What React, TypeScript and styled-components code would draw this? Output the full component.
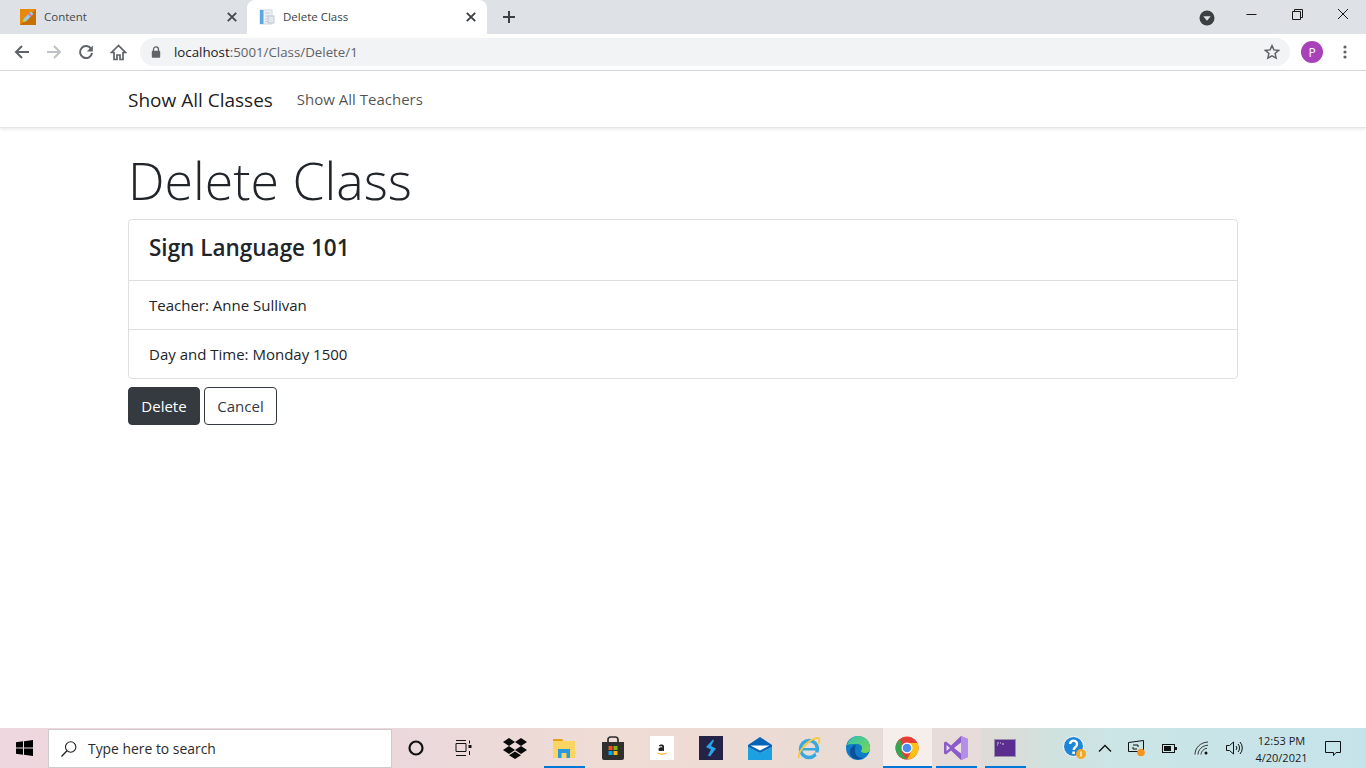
import React from "react";
import styled, { createGlobalStyle } from "styled-components";

const Global = createGlobalStyle`
  html, body { margin: 0; padding: 0; height: 100%; background: #fff; overflow: hidden; }
  #root { height: 100%; }
  * { box-sizing: border-box; }
  body { font-family: "Open Sans", "Noto Sans", "Liberation Sans", sans-serif; color: #212529; }
`;

const Page = styled.div`
  height: 768px;
  display: flex;
  flex-direction: column;
`;

/* Browser chrome */
const TabStrip = styled.div`
  height: 34px;
  background: #dee1e6;
  display: flex;
  flex: none;
`;
const Tab = styled.div<{ $active?: boolean }>`
  width: ${(p) => (p.$active ? "240px" : "247px")};
  padding: ${(p) => (p.$active ? "0 8px 0 12px" : "0 7px 0 20px")};
  height: 34px;
  display: flex;
  align-items: center;
  background: ${(p) => (p.$active ? "#fff" : "transparent")};
  border-radius: 8px 8px 0 0;
  flex: none;
`;
const TabTitle = styled.span<{ $active?: boolean }>`
  flex: 1;
  margin-left: 8px;
  padding-bottom: 2px;
  font-size: 11.5px;
  color: ${(p) => (p.$active ? "#3c4043" : "#45494d")};
  white-space: nowrap;
`;
const PlusButton = styled.div`
  width: 44px;
  display: flex;
  align-items: center;
  justify-content: center;
`;
const StripSpacer = styled.div`
  flex: 1;
`;
const WindowControls = styled.div`
  display: flex;
  align-items: flex-start;
  height: 34px;
`;
const ProfileDot = styled.div`
  width: 23px;
  height: 34px;
  display: flex;
  justify-content: center;
  align-items: center;
  margin-right: 10px;
  padding-top: 1px;
`;
const WinButton = styled.div`
  width: 46px;
  height: 28px;
  display: flex;
  align-items: center;
  justify-content: center;
`;
const Toolbar = styled.div`
  height: 37px;
  flex: none;
  background: #fff;
  border-bottom: 1px solid #dadce0;
  display: flex;
  align-items: center;
  padding: 0 0 0 6px;
`;
const ToolButton = styled.div`
  width: 32px;
  height: 28px;
  display: flex;
  align-items: center;
  justify-content: center;
`;
const Omnibox = styled.div`
  flex: 1;
  height: 28px;
  margin-left: 6px;
  background: #f1f3f4;
  border-radius: 14px;
  display: flex;
  align-items: center;
  padding: 0 10px 0 11px;
`;
const Url = styled.div`
  flex: 1;
  margin-left: 13px;
  font-size: 13.3px;
  color: #5f6368;
  white-space: nowrap;
  b { font-weight: 400; color: #202124; }
`;
const Avatar = styled.div`
  width: 22px;
  height: 22px;
  border-radius: 50%;
  background: #a842b8;
  color: #fff;
  font-size: 12px;
  display: flex;
  align-items: center;
  justify-content: center;
  margin: 0 12px 0 11px;
`;
const MenuButton = styled.div`
  width: 20px;
  display: flex;
  justify-content: center;
  margin-right: 11px;
`;

/* Site */
const Navbar = styled.nav`
  height: 57px;
  flex: none;
  background: #fff;
  border-bottom: 1px solid #e5e5e5;
  box-shadow: 0 1px 4px rgba(0, 0, 0, 0.1);
  display: flex;
  align-items: center;
  padding: 0 128px;
`;
const Brand = styled.a`
  font-size: 19px;
  padding-top: 2px;
  color: rgba(0, 0, 0, 0.9);
  margin-right: 24px;
`;
const NavLink = styled.a`
  font-size: 15px;
  color: rgba(0, 0, 0, 0.7);
`;
const Main = styled.main`
  flex: 1;
  padding: 0 128px;
`;
const Title = styled.h1`
  margin: 18px 0 5px;
  font-size: 51.8px;
  line-height: 68px;
  font-weight: 300;
  color: #212529;
`;
const Card = styled.div`
  border: 1px solid rgba(0, 0, 0, 0.125);
  border-radius: 4px;
  margin-bottom: 8px;
`;
const CardHeading = styled.div`
  height: 61px;
  padding: 0 20px 6px;
  display: flex;
  align-items: center;
  font-size: 22.5px;
  font-weight: 600;
  border-bottom: 1px solid rgba(0, 0, 0, 0.125);
`;
const CardRow = styled.div<{ $last?: boolean }>`
  height: ${(p) => (p.$last ? "48px" : "49px")};
  padding: 0 20px;
  display: flex;
  align-items: center;
  font-size: 15px;
  border-bottom: ${(p) => (p.$last ? "none" : "1px solid rgba(0, 0, 0, 0.125)")};
`;
const Actions = styled.div`
  display: flex;
  gap: 4px;
`;
const Button = styled.button<{ $dark?: boolean }>`
  height: 38px;
  min-width: 73px;
  width: ${(p) => (p.$dark ? "72px" : "73px")};
  padding: 0;
  border: 1px solid #343a40;
  border-radius: 4px;
  background: ${(p) => (p.$dark ? "#343a40" : "#fff")};
  color: ${(p) => (p.$dark ? "#fff" : "#343a40")};
  font: inherit;
  font-size: 15px;
  min-width: 0;
`;

/* Taskbar */
const Taskbar = styled.footer`
  height: 40px;
  flex: none;
  display: flex;
  align-items: stretch;
  background: linear-gradient(90deg, #eed7de 0, #ead8dc 400px, #efdcd4 620px, #eadbd5 830px, #dcdcd8 1000px, #cfe2df 1060px, #cbe5e6 1120px, #c5e3ea 1366px);
`;
const StartButton = styled.div`
  width: 48px;
  display: flex;
  align-items: center;
  justify-content: center;
`;
const SearchBox = styled.div`
  width: 344px;
  margin: 1px 0.5px 0 0;
  background: #fff;
  border: 1px solid #ccc;
  display: flex;
  align-items: center;
  padding-left: 11px;
  font-size: 13.9px;
  color: #2b2b2b;
  gap: 10px;
`;
const Cell = styled.div<{ $tone?: "hot" | "warm" }>`
  width: 49px;
  position: relative;
  display: flex;
  align-items: center;
  justify-content: center;
  background: ${(p) =>
    p.$tone === "hot" ? "#f6eeeb" : p.$tone === "warm" ? "#e8dcdb" : "transparent"};
`;
const RunMark = styled.span<{ $wide?: boolean }>`
  position: absolute;
  bottom: 0;
  height: 2px;
  left: ${(p) => (p.$wide ? "0" : "4px")};
  right: ${(p) => (p.$wide ? "0" : "4px")};
  background: #0078d7;
`;
const Tray = styled.div`
  flex: 1;
  display: flex;
  align-items: center;
  justify-content: flex-end;
`;
const TrayIcon = styled.div<{ $w: number }>`
  width: ${(p) => p.$w}px;
  display: flex;
  justify-content: center;
  align-items: center;
`;
const Clock = styled.div`
  width: 71px;
  padding: 1px 2px 0 0;
  text-align: center;
  font-size: 11px;
  line-height: 17px;
  color: #1b1b1b;
`;
const Notify = styled.div`
  width: 30px;
  margin-right: 18px;
  display: flex;
  justify-content: center;
`;

const Close = ({ c = "#45494d" }: { c?: string }) => (
  <svg width="16" height="16" viewBox="0 0 16 16"><path d="M3.8 3.8l8.4 8.4M12.2 3.8l-8.4 8.4" stroke={c} strokeWidth="1.9" fill="none" /></svg>
);

export default function App() {
  return (
    <Page>
      <Global />
      <TabStrip>
        <Tab>
          <svg width="16" height="16" viewBox="0 0 16 16">
            <rect width="16" height="16" fill="#e8890c" />
            <path d="M0 16L16 0v16z" fill="#c96f05" />
            <path d="M3 13l1-3.4L11 2.6l2.4 2.4-7 7z" fill="#8ed0ee" />
            <path d="M9.6 4l2.4 2.4-1.5 1.5L8 5.5z" fill="#e66bb0" />
            <path d="M3 13l1-3.4 2.4 2.4z" fill="#b5d86a" />
          </svg>
          <TabTitle>Content</TabTitle>
          <Close />
        </Tab>
        <Tab $active>
          <svg width="16" height="16" viewBox="0 0 16 16">
            <rect x="1" y="1" width="12" height="14" fill="#eef1f5" stroke="#cfd6de" />
            <rect x="1" y="1" width="3.5" height="14" fill="#5ea6e0" />
            <path d="M6 4h5M6 7h6M6 10h6M6 12.5h6" stroke="#c3cad3" />
            <rect x="9" y="7" width="6" height="7" fill="#e3e7ec" stroke="#c3cad3" />
          </svg>
          <TabTitle $active>Delete Class</TabTitle>
          <Close c="#3c4043" />
        </Tab>
        <PlusButton>
          <svg width="14" height="14" viewBox="0 0 14 14"><path d="M7 1v12M1 7h12" stroke="#3c4043" strokeWidth="2" /></svg>
        </PlusButton>
        <StripSpacer />
        <WindowControls>
          <ProfileDot>
            <svg width="16" height="16" viewBox="0 0 16 16"><circle cx="8" cy="8" r="7.5" fill="#3c4043" /><path d="M4.3 6.2h7.4L8 10.8z" fill="#dee1e6" /></svg>
          </ProfileDot>
          <WinButton>
            <svg width="11" height="11" viewBox="0 0 11 11"><path d="M0.5 5.5h10" stroke="#1a1a1a" /></svg>
          </WinButton>
          <WinButton>
            <svg width="11" height="11" viewBox="0 0 11 11"><path d="M0.5 2.5h8v8h-8zM2.5 2.5v-2h8v8h-2" stroke="#1a1a1a" fill="none" /></svg>
          </WinButton>
          <WinButton>
            <svg width="12" height="12" viewBox="0 0 12 12"><path d="M1 1l10 10M11 1L1 11" stroke="#1a1a1a" /></svg>
          </WinButton>
        </WindowControls>
      </TabStrip>
      <Toolbar>
        <ToolButton>
          <svg width="16" height="16" viewBox="0 0 16 16"><path d="M15 8H2.5M8 2L2 8l6 6" stroke="#5f6368" strokeWidth="2" fill="none" /></svg>
        </ToolButton>
        <ToolButton>
          <svg width="16" height="16" viewBox="0 0 16 16"><path d="M1 8h12.5M8 2l6 6-6 6" stroke="#bdc1c6" strokeWidth="2" fill="none" /></svg>
        </ToolButton>
        <ToolButton>
          <svg width="16" height="16" viewBox="0 0 16 16"><path d="M13.2 5A6 6 0 1 0 14 8.8" stroke="#5f6368" strokeWidth="2" fill="none" /><path d="M14.8 1.5v6h-6z" fill="#5f6368" /></svg>
        </ToolButton>
        <ToolButton>
          <svg width="17" height="17" viewBox="0 0 17 17"><path d="M8.5 1.5L1.5 8.5h2.5v7h3v-4.500h3v4.500h3v-7h2.500z" stroke="#5f6368" strokeWidth="1.7" fill="none" /></svg>
        </ToolButton>
        <Omnibox>
          <svg width="10" height="12" viewBox="0 0 10 12"><path d="M2.5 5V3.4a2.5 2.5 0 0 1 5 0V5" stroke="#5f6368" strokeWidth="1.3" fill="none" /><rect x="0.8" y="4.8" width="8.4" height="7" rx="1" fill="#5f6368" /></svg>
          <Url><b>localhost</b>:5001/Class/Delete/1</Url>
          <svg width="16" height="16" viewBox="0 0 16 16"><path d="M8 1.6l1.9 4.3 4.7.5-3.5 3.1 1 4.6L8 11.8l-4.1 2.3 1-4.6L1.4 6.4l4.7-.5z" stroke="#5f6368" strokeWidth="1.5" fill="none" /></svg>
        </Omnibox>
        <Avatar>P</Avatar>
        <MenuButton>
          <svg width="4" height="14" viewBox="0 0 4 14"><circle cx="2" cy="2" r="1.6" fill="#5f6368" /><circle cx="2" cy="7" r="1.6" fill="#5f6368" /><circle cx="2" cy="12" r="1.6" fill="#5f6368" /></svg>
        </MenuButton>
      </Toolbar>

      <Navbar>
        <Brand>Show All Classes</Brand>
        <NavLink>Show All Teachers</NavLink>
      </Navbar>
      <Main>
        <Title>Delete Class</Title>
        <Card>
          <CardHeading>Sign Language 101</CardHeading>
          <CardRow>Teacher: Anne Sullivan</CardRow>
          <CardRow $last>Day and Time: Monday 1500</CardRow>
        </Card>
        <Actions>
          <Button $dark>Delete</Button>
          <Button>Cancel</Button>
        </Actions>
      </Main>

      <Taskbar>
        <StartButton>
          <svg width="17" height="16" viewBox="0 0 17 16"><path d="M0 2.3l7-1v6.2H0zM8 1.2L17 0v7.5H8zM0 8.5h7v6.2l-7-1zM8 8.5h9V16l-9-1.2z" fill="#000" /></svg>
        </StartButton>
        <SearchBox>
          <svg width="18" height="18" viewBox="0 0 18 18"><circle cx="10.7" cy="7" r="5.2" stroke="#222" strokeWidth="1.1" fill="none" /><path d="M7 10.8L1.5 16.5" stroke="#222" strokeWidth="1.3" /></svg>
          Type here to search
        </SearchBox>
        <Cell>
          <svg width="18" height="16" viewBox="0 0 18 16"><circle cx="8" cy="8" r="6.5" stroke="#111" strokeWidth="2.2" fill="none" /></svg>
        </Cell>
        <Cell>
          <svg width="23" height="16" viewBox="0 0 23 16"><path d="M1 .5h10M1 15.500h10M1 3.500h10v8H1z" stroke="#111" fill="none" /><rect x="13.500" y="5" width="3" height="3" fill="#111" /><path d="M14.500 .5v3M14.500 11v4" stroke="#111" /></svg>
        </Cell>
        <Cell>
          <svg width="24" height="22" viewBox="0 0 24 22"><path d="M6 1L0 5l6 4 6-4zM18 1l-6 4 6 4 6-4zM0 13l6 4 6-4-6-4zM24 13l-6 4-6-4 6-4zM6 18.2L12 14.5l6 3.7-6 3.8z" fill="#0a0a0a" /></svg>
        </Cell>
        <Cell>
          <svg width="22" height="19" viewBox="0 0 22 19"><path d="M0 0h9l2 2.500h-11z" fill="#e3a21a" /><rect y="2" width="22" height="17" fill="#fcd462" /><path d="M5 10h12v9h-3.500v-5h-5v5H5z" fill="#2a9ae0" /></svg>
          <RunMark />
        </Cell>
        <Cell>
          <svg width="24" height="24" viewBox="0 0 24 24"><path d="M7 7V3.500A2.500 2.500 0 0 1 9.500 1h5A2.500 2.500 0 0 1 17 3.500V7" stroke="#2b2b2b" strokeWidth="1.700" fill="none" /><path d="M1 6h22v16a2 2 0 0 1-2 2H3a2 2 0 0 1-2-2z" fill="#2f2f2f" /><rect x="7.500" y="10" width="4" height="4" fill="#f25022" /><rect x="12.500" y="10" width="4" height="4" fill="#7fba00" /><rect x="7.500" y="15" width="4" height="4" fill="#00a4ef" /><rect x="12.500" y="15" width="4" height="4" fill="#ffb900" /></svg>
        </Cell>
        <Cell>
          <svg width="24" height="24" viewBox="0 0 24 24"><rect width="24" height="24" fill="#fff" /><path d="M9 9.500c1-1.200 5-1.500 5 1v4.500h-1.500v-.8c-1 1.300-4 1.200-4-.8 0-1.900 2.500-2.200 4-2 .2-1.400-2-1.500-3-.9z" fill="#222" /><path d="M7.500 17c2.500 1.500 6 1.500 9 0" stroke="#f90" fill="none" /></svg>
        </Cell>
        <Cell>
          <svg width="24" height="24" viewBox="0 0 24 24"><rect width="24" height="24" fill="#232347" /><path d="M14 3.500L7 11l5 2.500-3 6 2 1 6-8-5-2.500 3-5.500z" fill="#2aa3e8" /></svg>
        </Cell>
        <Cell>
          <svg width="24" height="23" viewBox="0 0 24 23"><path d="M0 10l12 6 12-6v13H0z" fill="#1ba1e2" /><path d="M12 0l12 8v2l-12 6L0 10V8z" fill="#0364b8" /><path d="M2.500 8.500h19L12 13.500z" fill="#fff" /></svg>
        </Cell>
        <Cell>
          <svg width="24" height="24" viewBox="0 0 24 24"><circle cx="12" cy="13" r="8.500" fill="none" stroke="#37a9e0" strokeWidth="3.500" /><rect x="5" y="12" width="14" height="2.500" fill="#37a9e0" /><path d="M18 16.500h5a10 10 0 0 1-3 4z" fill="#efdcd4" /><path d="M2 22C0 17 10 4 20 2c3-.5 3 3 1 6" stroke="#f5c842" strokeWidth="1.800" fill="none" /></svg>
        </Cell>
        <Cell>
          <svg width="24" height="24" viewBox="0 0 24 24"><defs><linearGradient id="edge" x1="0" y1="0" x2="1" y2="1"><stop offset="0" stopColor="#2fc4b2" /><stop offset="1" stopColor="#7bd651" /></linearGradient></defs><circle cx="12" cy="12" r="12" fill="#0f7cc4" /><path d="M1 9C3 3 8 0 12 0c7 0 12 5 12 12 0 3-2 5-5 5-2.500 0-4-1-4-2 2-2 1.500-7-4-7C6 8 3 8 1 9z" fill="url(#edge)" /><path d="M9 15c0 4 3 7 8 7-5 3-12 1-13-5-.5-4 3-8 6-8-1 1.500-1 4-1 6z" fill="#0b4f9e" /></svg>
        </Cell>
        <Cell $tone="hot">
          <svg width="24" height="24" viewBox="0 0 24 24"><circle cx="12" cy="12" r="11.500" fill="#e53f35" /><path d="M1.500 7.500L7 17l5 6.500A11.500 11.500 0 0 1 1.500 7.500z" fill="#33a852" /><path d="M7 17L1.500 7.500 5 3 8 12z" fill="#33a852" /><path d="M12 7h10.500A11.500 11.500 0 0 1 12 23.500L17 14z" fill="#fbc116" /><circle cx="12" cy="12" r="5.500" fill="#fff" /><circle cx="12" cy="12" r="4.300" fill="#4b8bf4" /></svg>
          <RunMark $wide />
        </Cell>
        <Cell $tone="warm">
          <svg width="24" height="24" viewBox="0 0 24 24"><path d="M17 0l7 3v18l-7 3-10-9.500L2 18.500 0 17.500v-11l2-1 5 4z" fill="#8a5cc9" /><path d="M17 0l7 3v18l-7 3z" fill="#b48fe8" /><path d="M17 6.500L10 12l7 5.500zM2.500 9v6L6 12z" fill="#ecdfe0" /></svg>
          <RunMark />
        </Cell>
        <Cell>
          <svg width="22" height="18" viewBox="0 0 22 18"><rect x="0.500" y="0.500" width="21" height="17" fill="#5c2d91" stroke="#9d8ea8" /><path d="M3 4h2M6 4h1M8 5h2M3 6h1" stroke="#d8cfe6" /></svg>
          <RunMark />
        </Cell>
        <Tray>
          <TrayIcon $w={32}>
            <svg width="24" height="24" viewBox="0 0 24 24"><circle cx="10.500" cy="10.500" r="10" fill="#1d86d9" stroke="#fff" /><path d="M7 8a3.500 3.500 0 1 1 5.500 3c-1.500 1-1.800 1.500-1.800 3" stroke="#fff" strokeWidth="2.400" fill="none" /><rect x="9.300" y="15.500" width="2.600" height="2.600" fill="#fff" /><circle cx="18" cy="18" r="5" fill="#f5a623" /><rect x="17.300" y="15.500" width="1.400" height="5" fill="#fff" /></svg>
          </TrayIcon>
          <TrayIcon $w={28}>
            <svg width="14" height="8" viewBox="0 0 14 8"><path d="M1 7.500l6-6 6 6" stroke="#111" strokeWidth="1.300" fill="none" /></svg>
          </TrayIcon>
          <TrayIcon $w={36}>
            <svg width="18" height="17" viewBox="0 0 18 17"><path d="M0.500 2.500l15-2v11h-15z" stroke="#111" fill="none" /><path d="M5 5h5M5 9h4M10 5v2M5 9v-2" stroke="#111" /><circle cx="13" cy="12.500" r="3.800" fill="#f7931e" /></svg>
          </TrayIcon>
          <TrayIcon $w={28}>
            <svg width="15" height="9" viewBox="0 0 15 9"><rect x="0.500" y="0.500" width="12" height="8" fill="none" stroke="#111" /><rect x="2" y="2" width="7" height="5" fill="#111" /><rect x="13" y="3" width="2" height="3" fill="#111" /></svg>
          </TrayIcon>
          <TrayIcon $w={38}>
            <svg width="16" height="14" viewBox="0 0 16 14"><path d="M1 13.500C1 7 6 1.500 14 1M4 13.500C4 9 8 4.500 14 4.200M7 13.500C7 10.500 10 7.500 13 7.300" stroke="#333" fill="none" /><circle cx="12" cy="12" r="1.500" fill="#111" /></svg>
          </TrayIcon>
          <TrayIcon $w={26}>
            <svg width="17" height="14" viewBox="0 0 17 14"><path d="M0.500 4.500h3L7.500 1v12l-4-3.500h-3z" stroke="#111" fill="none" /><path d="M10 5a3 3 0 0 1 0 4M12 3a6 6 0 0 1 0 8M14 1a9 9 0 0 1 0 12" stroke="#111" fill="none" /></svg>
          </TrayIcon>
          <Clock>12:53 PM<br />4/20/2021</Clock>
          <Notify>
            <svg width="16" height="15" viewBox="0 0 16 15"><path d="M0.500 0.500h15v11h-4.500l-2.500 3v-3h-8z" stroke="#111" fill="none" /></svg>
          </Notify>
        </Tray>
      </Taskbar>
    </Page>
  );
}
